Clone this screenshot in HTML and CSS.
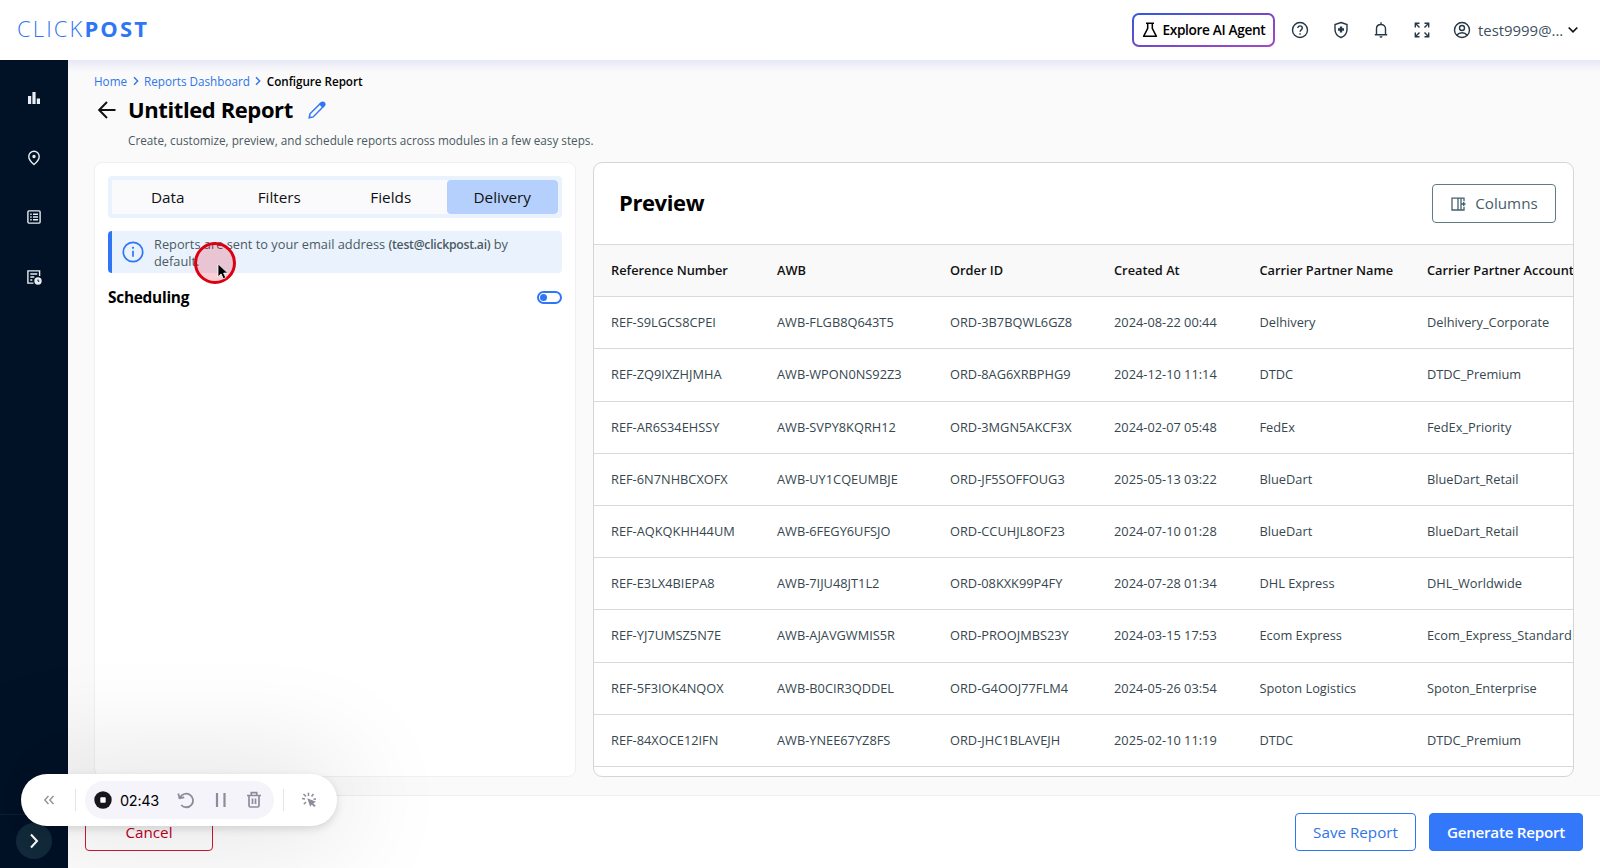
FILE: index.html
```
<!DOCTYPE html>
<html lang="en">
<head>
<meta charset="utf-8">
<title>Configure Report</title>
<link rel="stylesheet" href="styles.css">
</head>
<body>
<header class="topbar">
  <div class="logo"><span>CLICK</span><b>POST</b></div>
  <div class="top-actions">
    <button class="agent"><svg width="16" height="16" viewBox="0 0 16 16"><path d="M4 1.200h8M5.700 1.200v5.200L1.600 14.300h12.800L10.300 6.400V1.200" fill="none" stroke="#000" stroke-width="1.500" stroke-linejoin="round"/></svg><span>Explore AI Agent</span></button>
    <svg class="ic help" width="18" height="18" viewBox="0 0 18 18"><circle cx="9" cy="9" r="7.500"/><path d="M6.800 7.100c0-3 4.500-2.800 4.500 0 0 1.800-2.200 1.700-2.200 3.600M9.100 12.200v1.500"/></svg>
    <svg class="ic shield" width="18" height="18" viewBox="0 0 18 18"><path d="M9 1.500 15 3.600v4.800c0 3.800-2.500 6.700-6 8.100-3.500-1.400-6-4.300-6-8.100V3.600Z"/><path d="M9 5.500v6M6 8.500h6" stroke-width="2.400"/></svg>
    <svg class="ic bell" width="18" height="18" viewBox="0 0 18 18"><path d="M2.800 13.800h12.400M4.500 13.500V7.700c0-5.700 9-5.700 9 0v5.800M9 1.300v2"/><path d="M7.500 15.200h3c0 2-3 2-3 0Z" fill="#263746" stroke="none"/></svg>
    <svg class="ic expand" width="18" height="18" viewBox="0 0 18 18"><path d="M2.300 6.500V2.300h4.200M2.300 2.300l4.200 4.200M11.500 2.300h4.200v4.200M15.700 2.300l-4.200 4.200M2.300 11.500v4.200h4.200M2.300 15.700l4.200-4.200M15.700 11.500v4.200h-4.200M15.700 15.700l-4.200-4.200"/></svg>
    <svg class="ic user" width="18" height="18" viewBox="0 0 18 18"><circle cx="9" cy="9" r="7.500"/><circle cx="9" cy="7" r="2.500"/><path d="M3.800 14.200c2.600-3.200 7.800-3.200 10.400 0"/></svg>
    <span class="account">test9999@...</span>
    <svg class="chev" width="12" height="8" viewBox="0 0 12 8"><path d="m1.700 1.500 4.300 4.300 4.300-4.300"/></svg>
  </div>
</header>

<div class="shell">
  <nav class="sidebar">
    <div class="nav-items">
      <svg width="16" height="16" viewBox="0 0 16 16"><path d="M2 6h3.200v8H2zM6.400 2h3.200v12H6.400zM10.800 8.500H14V14h-3.200z" fill="#e8eef3"/></svg>
      <svg width="16" height="16" viewBox="0 0 16 16" class="line"><path d="M8 14.500S2.800 10.300 2.800 6.500a5.200 5.200 0 0 1 10.400 0c0 3.800-5.200 8-5.200 8Z"/><circle cx="8" cy="6.500" r="1" fill="#e8eef3"/></svg>
      <svg width="16" height="16" viewBox="0 0 16 16" class="line"><rect x="1.900" y="1.900" width="12.200" height="12.200" rx="1"/><path d="M4.200 5.300h1.500M7 5.300h5M4.200 8h1.500M7 8h5M4.200 10.700h1.500M7 10.700h5"/></svg>
      <svg width="16" height="16" viewBox="0 0 16 16" class="line"><path d="M7.500 14.100H1.900V1.900h11.700v5M4.300 5h7M4.300 8h4M4.300 11h2"/><circle cx="12" cy="12" r="3" fill="#e8eef3"/><path d="M12 10.500v1.700h1.300" stroke="#011126" stroke-width="1"/></svg>
    </div>
    <div class="nav-foot"><div class="nav-toggle"><svg width="12" height="18" viewBox="0 0 12 18"><path d="m3 2.500 6 6.500-6 6.500"/></svg></div></div>
  </nav>

  <div class="page">
    <main class="content">
      <div class="crumbs"><a>Home</a><svg width="6" height="10" viewBox="0 0 6 10"><path d="m1 1.200 3.700 3.800L1 8.800"/></svg><a>Reports Dashboard</a><svg width="6" height="10" viewBox="0 0 6 10"><path d="m1 1.200 3.700 3.800L1 8.800"/></svg><span>Configure Report</span></div>
      <div class="title-row">
        <svg class="back" width="18" height="18" viewBox="0 0 18 18"><path d="M17.500 9H1.500M9 1 1.200 9 9 17"/></svg>
        <h1>Untitled Report</h1>
        <svg class="pen" width="18" height="18" viewBox="0 0 18 18"><path d="m1.200 16.800.8-4L12.600 2.200a2 2 0 0 1 3 3L5.200 15.900Z" fill="none" stroke="#2f75f5" stroke-width="1.500"/><path d="m11 3.300 2-2a2.200 2.200 0 0 1 3.700 3.700l-2 2Z" fill="#2f75f5"/></svg>
      </div>
      <p class="sub">Create, customize, preview, and schedule reports across modules in a few easy steps.</p>

      <div class="columns">
        <section class="config">
          <div class="tabs"><button>Data</button><button>Filters</button><button>Fields</button><button class="active">Delivery</button></div>
          <div class="notice">
            <svg width="22" height="22" viewBox="0 0 22 22"><circle cx="11" cy="11" r="9.700" fill="none" stroke="#2f75f5" stroke-width="1.700"/><path d="M11 9.800v6" stroke="#2f75f5" stroke-width="1.700"/><circle cx="11" cy="6.800" r="1.100" fill="#2f75f5"/></svg>
            <p>Reports are sent to your email address <b>(test@clickpost.ai)</b> by<br>default.</p>
          </div>
          <div class="schedule"><h2>Scheduling</h2><span class="switch"><i></i></span></div>
        </section>

        <section class="preview">
          <div class="preview-head"><h2>Preview</h2>
            <button class="cols"><svg width="16" height="16" viewBox="0 0 16 16"><path d="M14 5.300V2.200H2v11.800h12v-3.200M8 2.200v11.800M11 2.200v11.800M11 8h4.500M13.700 6v4" fill="none" stroke="#45606b" stroke-width="1.300"/></svg><span>Columns</span></button>
          </div>
          <div class="grid">
            <div class="row head"><span>Reference Number</span><span>AWB</span><span>Order ID</span><span>Created At</span><span>Carrier Partner Name</span><span>Carrier Partner Account</span></div>
            <div class="row"><span>REF-S9LGCS8CPEI</span><span>AWB-FLGB8Q643T5</span><span>ORD-3B7BQWL6GZ8</span><span>2024-08-22 00:44</span><span>Delhivery</span><span>Delhivery_Corporate</span></div>
            <div class="row"><span>REF-ZQ9IXZHJMHA</span><span>AWB-WPON0NS92Z3</span><span>ORD-8AG6XRBPHG9</span><span>2024-12-10 11:14</span><span>DTDC</span><span>DTDC_Premium</span></div>
            <div class="row"><span>REF-AR6S34EHSSY</span><span>AWB-SVPY8KQRH12</span><span>ORD-3MGN5AKCF3X</span><span>2024-02-07 05:48</span><span>FedEx</span><span>FedEx_Priority</span></div>
            <div class="row"><span>REF-6N7NHBCXOFX</span><span>AWB-UY1CQEUMBJE</span><span>ORD-JF5SOFFOUG3</span><span>2025-05-13 03:22</span><span>BlueDart</span><span>BlueDart_Retail</span></div>
            <div class="row"><span>REF-AQKQKHH44UM</span><span>AWB-6FEGY6UFSJO</span><span>ORD-CCUHJL8OF23</span><span>2024-07-10 01:28</span><span>BlueDart</span><span>BlueDart_Retail</span></div>
            <div class="row"><span>REF-E3LX4BIEPA8</span><span>AWB-7IJU48JT1L2</span><span>ORD-08KXK99P4FY</span><span>2024-07-28 01:34</span><span>DHL Express</span><span>DHL_Worldwide</span></div>
            <div class="row"><span>REF-YJ7UMSZ5N7E</span><span>AWB-AJAVGWMIS5R</span><span>ORD-PROOJMBS23Y</span><span>2024-03-15 17:53</span><span>Ecom Express</span><span>Ecom_Express_Standard</span></div>
            <div class="row"><span>REF-5F3IOK4NQOX</span><span>AWB-B0CIR3QDDEL</span><span>ORD-G4OOJ77FLM4</span><span>2024-05-26 03:54</span><span>Spoton Logistics</span><span>Spoton_Enterprise</span></div>
            <div class="row"><span>REF-84XOCE12IFN</span><span>AWB-YNEE67YZ8FS</span><span>ORD-JHC1BLAVEJH</span><span>2025-02-10 11:19</span><span>DTDC</span><span>DTDC_Premium</span></div>
          </div>
        </section>
      </div>
    </main>
    <footer class="footer">
      <button class="btn cancel">Cancel</button>
      <button class="btn save">Save Report</button>
      <button class="btn generate">Generate Report</button>
    </footer>
  </div>
</div>

<div class="recorder">
  <svg class="collapse" width="12" height="12" viewBox="0 0 12 12"><path d="M5.500 2 1.700 6l3.800 4M10.500 2 6.700 6l3.800 4"/></svg>
  <i class="sep"></i>
  <div class="rec-main">
    <svg width="18" height="18" viewBox="0 0 18 18"><circle cx="9" cy="9" r="8.700" fill="#17161d"/><rect x="6.300" y="6.300" width="5.400" height="5.400" rx=".8" fill="#fff"/></svg>
    <span class="time">02:43</span>
    <svg class="g restart" width="18" height="18" viewBox="0 0 18 18"><path d="M3 6.800A6.800 6.800 0 1 1 4.200 14M1.300 2.500l1.200 4.700 4.700-.8"/></svg>
    <svg class="g pause" width="12" height="16" viewBox="0 0 12 16"><path d="M2 1v14M9.500 1v14"/></svg>
    <svg class="g trash" width="16" height="18" viewBox="0 0 16 18"><path d="M1 4.500h14M3 5v9.500Q3 16 4.500 16h7q1.500 0 1.500-1.500V5M5.300 4V1.700h5.400V4M6.500 7.500V13M9.500 7.500V13"/></svg>
  </div>
  <i class="sep second"></i>
  <svg class="click" width="16" height="16" viewBox="0 0 16 16"><path d="M1 6.500l3 .5M2.500 2 5 4.500M7.500.800V4M12.500 2 10.500 4.500M15 7l-2.500.2M2.800 12.200 5 10" fill="none" stroke="#8d8c9b" stroke-width="1.500"/><path d="m6.300 6.200 8.700 3.600-2.800 1.400 2.500 2.600-1.500 1.300-2.400-2.700-1.600 2.300Z" fill="#8d8c9b"/></svg>
</div>
<div class="pointer"><svg width="12" height="17" viewBox="0 0 12 17"><path d="M1 .8v13l3.100-2.900 2.200 4.900 2.500-1.200-2.200-4.500h4.200Z" fill="#000" stroke="#fff" stroke-width=".8"/></svg></div>
</body>
</html>
```
FILE: styles.css
```
* { box-sizing: border-box; }
body { margin: 0; width: 1600px; height: 868px; overflow: hidden; position: relative; font-family: "Open Sans", "Noto Sans", sans-serif; color: #000; background: #fafafb; display: flex; flex-direction: column; }
h1, h2, p { margin: 0; }
button { font: inherit; margin: 0; padding: 0; border: 0; background: none; }
svg { display: block; flex: none; }

.topbar { height: 60px; flex: none; background: #fff; display: flex; justify-content: space-between; align-items: center; padding-left: 17px; }
.logo { font-size: 22px; line-height: 30px; letter-spacing: 2.1px; color: #2f75f5; display: flex; padding-bottom: 4px; }
.logo span { font-weight: 300; }
.top-actions { display: flex; align-items: center; height: 60px; padding-right: 21px; }
.agent { width: 143px; height: 34px; border: 2px solid transparent; border-radius: 7px; background: linear-gradient(#fff, #fff) padding-box, linear-gradient(165deg, #2f5be0, #7448c8 50%, #a548c8) border-box; display: flex; align-items: center; justify-content: center; gap: 4px; font-size: 13.700px; font-weight: 600; letter-spacing: -.35px; margin-right: 16px; white-space: nowrap; }
.agent span { padding-bottom: 2px; }
.ic { fill: none; stroke: #263746; stroke-width: 1.4; margin-right: 22.400px; }
.user { margin-right: 7px; }
.account { font-size: 14.900px; color: #40505d; width: 86px; }
.chev { fill: none; stroke: #111; stroke-width: 1.700; margin-left: 3px; }

.shell { flex: 1; min-height: 0; display: flex; }
.sidebar { width: 68px; flex: none; background: #011126; display: flex; flex-direction: column; justify-content: space-between; }
.nav-items { padding-top: 30px; display: flex; flex-direction: column; align-items: center; gap: 43.600px; }
.line { fill: none; stroke: #e8eef3; stroke-width: 1.4; }
.nav-foot { height: 54px; border-top: 1px solid #0b2034; display: flex; justify-content: center; padding-top: 8px; }
.nav-toggle { width: 36px; height: 36px; border-radius: 50%; background: #122a3b; display: flex; align-items: center; justify-content: center; }
.nav-toggle path { fill: none; stroke: #fff; stroke-width: 2; }

.page { flex: 1; min-width: 0; display: flex; flex-direction: column; }
.content { height: 736px; flex: none; padding: 11px 26px 19px; background: linear-gradient(#e7e8f6, #fafafb 12px); border-bottom: 1px solid #eeeeef; }
.crumbs { height: 19px; display: flex; align-items: center; font-size: 11.700px; color: #2f75e8; }
.crumbs svg { margin: 0 5.500px; fill: none; stroke: #2f75e8; stroke-width: 1.4; }
.crumbs span { color: #000; font-weight: 600; letter-spacing: -.05px; }
.title-row { height: 40px; display: flex; align-items: center; padding-left: 4px; }
.back { fill: none; stroke: #111; stroke-width: 1.9; margin-right: 12px; }
.title-row h1 { font-size: 22px; line-height: 30px; font-weight: 700; letter-spacing: -.4px; padding-bottom: 2px; }
.pen { margin-left: 15px; }
.sub { height: 20px; line-height: 21px; margin-left: 34px; font-size: 11.720px; color: #4b5a61; }

.columns { height: 615px; margin-top: 12px; display: grid; grid-template-columns: 482px 981px; gap: 17px; }
.config { background: #fff; border: 1px solid #f0f0f3; border-radius: 8px; padding: 13px; }
.tabs { height: 42px; border: 4px solid #eaf3fd; border-radius: 4px; background: #fafafd; display: grid; grid-template-columns: repeat(4, 1fr); }
.tabs button { font-size: 15.300px; color: #111; border-radius: 4px; }
.tabs .active { background: #b5d0fd; }
.notice { height: 42px; margin-top: 13px; background: #eaf3fd; border-left: 4px solid #2f75f5; border-radius: 4px; display: flex; align-items: center; gap: 10px; padding-left: 10px; font-size: 12.800px; line-height: 17px; color: #4b5a61; }
.notice p { padding-top: 1px; }
.notice b { font-weight: 600; font-size: 12.200px; letter-spacing: -.25px; }
.schedule { margin-top: 12px; height: 25px; display: flex; justify-content: space-between; align-items: center; }
.schedule h2 { font-size: 15.400px; font-weight: 700; letter-spacing: -.25px; }
.switch { width: 25px; height: 13px; border: 2px solid #2f75f5; border-radius: 7px; display: flex; align-items: center; padding-left: 1px; }
.switch i { width: 7px; height: 7px; border-radius: 50%; background: #2f75f5; }

.preview { background: #fff; border: 1px solid #d4d5d6; border-radius: 9px; overflow: hidden; }
.preview-head { height: 81px; display: flex; align-items: center; justify-content: space-between; padding: 0 17px 0 25px; }
.preview-head h2 { font-size: 22px; line-height: 30px; letter-spacing: -.4px; padding-bottom: 3px; }
.cols { width: 124px; height: 39px; border: 1px solid #607c83; border-radius: 4px; color: #45606b; display: flex; align-items: center; justify-content: center; gap: 9px; font-size: 15.200px; }
.cols span { padding-bottom: 2px; }
.grid { border-top: 1px solid #d7d9da; }
.row { height: 52.200px; display: grid; grid-template-columns: 166px 173px 164px 145.500px 167.500px 145px; padding: 0 0 1px 17px; align-items: center; border-bottom: 1px solid #d7d9da; font-size: 12.800px; color: #36474f; white-space: nowrap; }
.head { background: #f9f9fa; color: #111; font-weight: 600; }

.footer { flex: 1; background: #fff; display: flex; align-items: center; padding: 0 17px; }
.btn { height: 38px; border-radius: 4px; font-size: 15.200px; padding-bottom: 1px; border: 1px solid #2f75f5; }
.cancel { width: 128px; margin-right: auto; color: #c2001f; border: 1px solid #cf1836; }
.save { width: 121px; color: #2f75e8; margin-right: 13px; }
.generate { width: 154px; color: #fff; background: #3377fb; font-weight: 600; letter-spacing: -.25px; }

/* Floating recorder overlay */
.recorder { position: absolute; left: 21px; top: 774px; width: 316px; height: 52px; border-radius: 26px; background: #fff; box-shadow: 0 3px 8px rgba(0,0,0,.13), 0 0 110px 12px rgba(0,0,0,.13); display: flex; align-items: center; padding-left: 22px; }
.collapse { fill: none; stroke: #8d8c9b; stroke-width: 1.300; }
.sep { width: 1px; height: 22px; background: #e4e4e9; margin: 0 9px 0 20px; }
.second { margin: 0 17px 0 9px; }
.rec-main { width: 189px; height: 38px; border-radius: 19px; background: #f5f4fb; display: flex; align-items: center; padding-left: 9px; }
.time { font-family: Inter, sans-serif; font-size: 14.500px; width: 39px; margin-left: 8px; letter-spacing: -.3px; }
.g { fill: none; stroke: #8d8c9b; stroke-width: 1.800; }
.restart { margin-left: 18px; }
.pause { margin-left: 19.500px; stroke-width: 2.200; }
.trash { margin-left: 19.500px; stroke-width: 1.700; }
.pointer { position: absolute; left: 194px; top: 242px; width: 42px; height: 42px; border-radius: 50%; border: 3px solid #dc0010; background: rgba(230,0,35,.19); }
.pointer svg { position: absolute; left: 20px; top: 18px; }
```
